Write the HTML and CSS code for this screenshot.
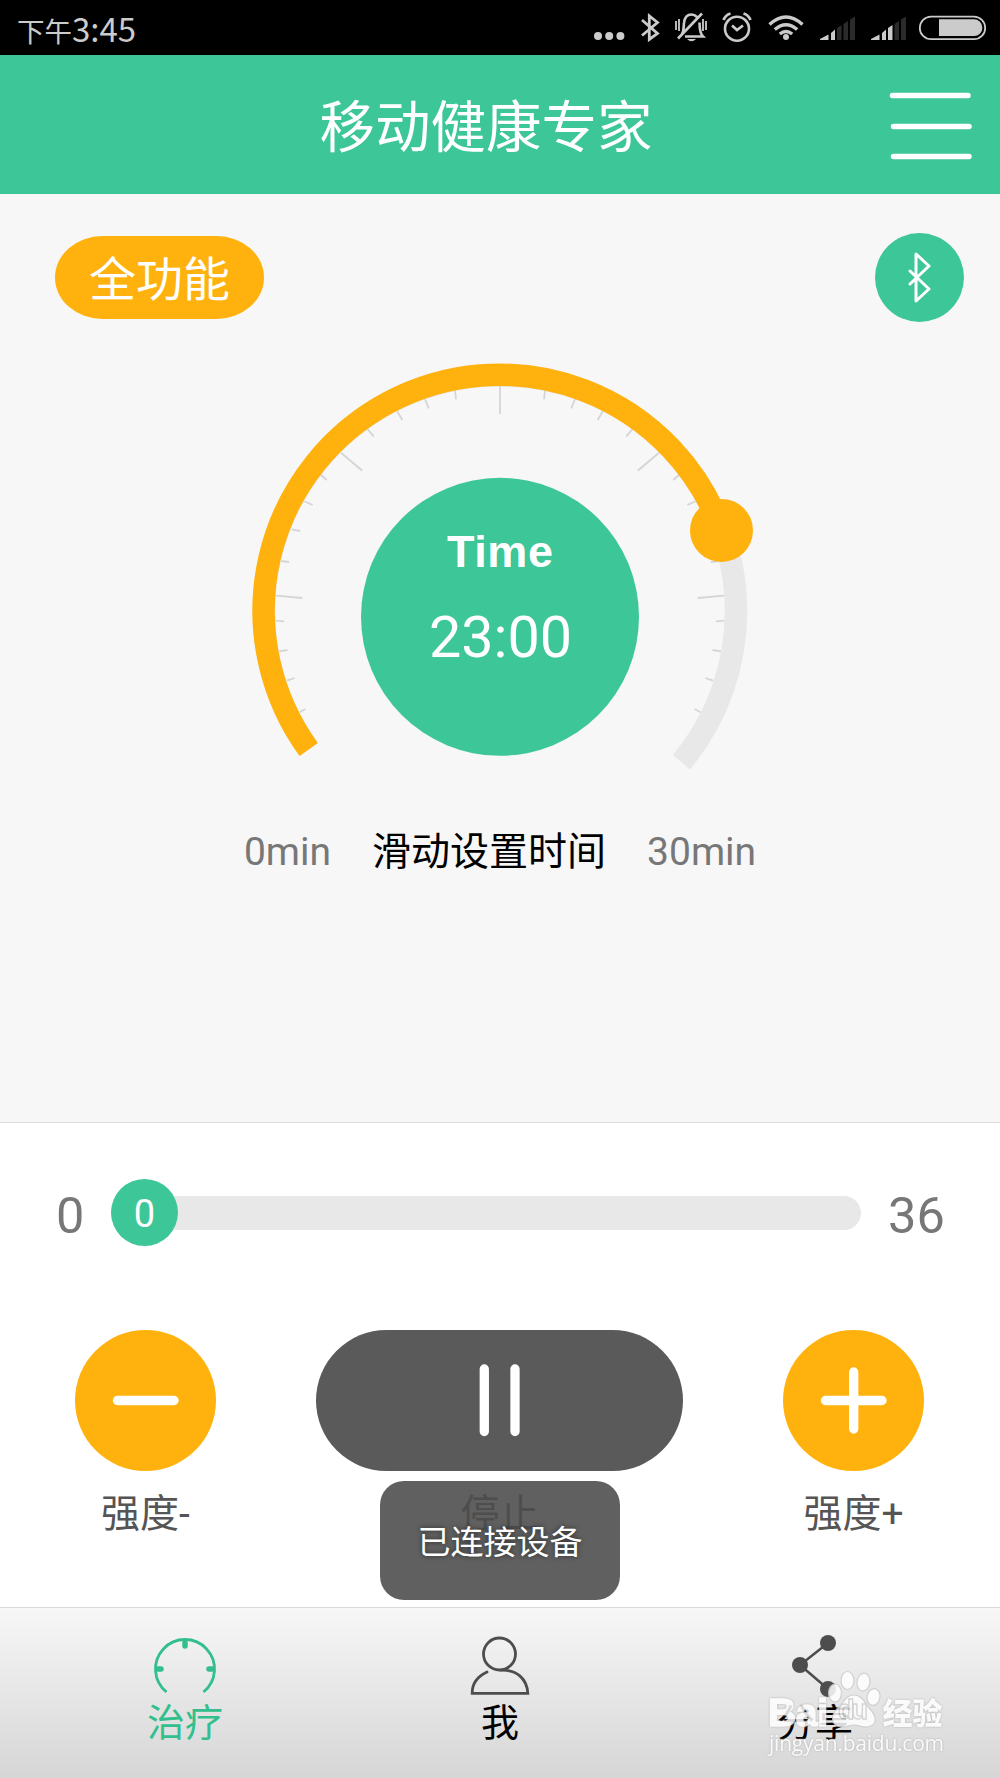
FILE: index.html
```html
<!DOCTYPE html>
<html lang="zh-CN">

<head>
    <meta charset="UTF-8" />
    <meta name="viewport" content="width=device-width, initial-scale=1.0" />
    <title>移动健康专家</title>
    <link rel="stylesheet" href="styles.css">
</head>

<body>
    <div class="status-bar">
        <div class="clock">下午<span>3:45</span></div>
        <svg class="status-icons" viewBox="590 0 400 55" fill="none" stroke="#cbcbcb">
            <!-- notifications -->
            <g fill="#cbcbcb" stroke="none">
                <circle cx="598" cy="36" r="4" />
                <circle cx="609.2" cy="36" r="4" />
                <circle cx="620.4" cy="36" r="4" />
            </g>
            <!-- bluetooth -->
            <path d="M642 20l15.500 13.500L649.300 39.500V16l8.200 6.500L642 35.500" stroke-width="2.800" />
            <!-- muted bell -->
            <path d="M682 34c2-3 1.500-7 2-11 .5-5 3-8.500 7.500-8.500 2.500 0 4 1 5.500 2.500M685 36.500h18c-3-3-3.500-7-3.500-14M678 38.500L702 13.500" stroke-width="2.600" />
            <path d="M687 39h9q-4.500 4.500-9 0z" fill="#cbcbcb" stroke="none" />
            <path d="M676 21v9M679 19v12M703 19v12M706 21v9" stroke-width="1.800" />
            <!-- alarm -->
            <circle cx="737" cy="28.700" r="12" stroke-width="2.600" />
            <path d="M732 25.500l5 4.500 6-4.500" stroke-width="2.700" />
            <path d="M723.500 20q2-5 7-6.500M750.500 20q-2-5-7-6.500" stroke-width="2.800" />
            <!-- wifi -->
            <g stroke-width="3.400">
                <path d="M769.500 24.500q16.500-15 33 0" />
                <path d="M774.800 29.500q11.200-9.500 22.400 0" />
                <path d="M779.800 34q6.200-5 12.400 0" />
            </g>
            <circle cx="786" cy="37" r="3" fill="#cbcbcb" stroke="none" />
            <!-- signal -->
            <g stroke="none">
                <path d="M820 40v-1l8.500-4.500V40zM831 33l4-3.500V40h-4z" fill="#cbcbcb" />
                <path d="M837 28l4.500-3v15H837zM843.500 24l4.500-3v19h-4.500zM850 19.500l5-3V40h-5z" fill="#2b2b2b" />
                <path d="M871 40v-1l8.500-4.500V40zM882 33l4-3.500V40h-4zM888 28l4.500-3v15H888z" fill="#cbcbcb" />
                <path d="M894.500 24l4.500-3v19h-4.500zM901 19.500l5-3V40h-5z" fill="#2b2b2b" />
            </g>
            <!-- battery -->
            <rect x="919.800" y="16.600" width="65.400" height="22.600" rx="11.300" stroke-width="1.800" />
            <path d="M939 19.300h35a8.400 8.400 0 0 1 0 16.800h-35z" fill="#cbcbcb" stroke="none" />
        </svg>
    </div>

    <header class="header">
        <h1>移动健康专家</h1>
        <svg class="menu" viewBox="0 0 84 68" stroke="#fff" stroke-width="5.500" stroke-linecap="round">
            <path d="M3.500 3.500H79M4.500 34.500H80M4.500 64.500H80" />
        </svg>
    </header>

    <section class="timer">
        <div class="timer-top">
            <button class="mode">全功能</button>
            <button class="bt">
                <svg viewBox="0 0 89 89" fill="none" stroke="#fff" stroke-width="3" stroke-linecap="round" stroke-linejoin="round">
                    <path d="M35 38l19 18-13 12V21l13 12-19 18" />
                </svg>
            </button>
        </div>

        <svg class="dial" viewBox="240 350 520 430">
            <path d="M308.700 749.500A236 236 0 1 1 681.400 762.200" class="dial-track" />
            <g class="ticks">
                <path d="M500 386V414" />
                <g id="ticks">
                    <path d="M341 452.700L362.300 470.700M276 595.700L302.300 598" />
                    <path d="M455 390L456 399.300M425 399L428.700 408.300M397 411L402.300 420M367 428.500L373.700 436.300M320 474L326.700 480M304.400 501.300L312.600 505M291.600 529.300L300.200 531M281.300 561L289.200 562M275.800 620.700L284 621.300M279 651.300L287.500 650M286.800 680.700L294.700 678M299.600 712.300L305.400 709" />
                </g>
                <use href="#ticks" transform="matrix(-1 0 0 1 1000 0)" />
            </g>
            <path d="M308.700 749.500A236 236 0 1 1 721.500 530.400" class="dial-value" />
            <circle cx="721.500" cy="530.400" r="31.500" fill="#ffb20e" />
            <circle cx="500" cy="616.800" r="139" fill="#3dc698" />
            <text x="500" y="567" class="dial-label" textLength="106">Time</text>
            <text x="500.500" y="656.500" class="dial-time">23:00</text>
        </svg>

        <div class="range">
            <span>0min</span>
            <strong>滑动设置时间</strong>
            <span>30min</span>
        </div>
    </section>

    <section class="control">
        <div class="slider">
            <span class="slider-min">0</span>
            <div class="slider-track">
                <div class="slider-thumb">0</div>
            </div>
            <span class="slider-max">36</span>
        </div>

        <div class="buttons">
            <div class="action">
                <svg class="round" viewBox="0 0 141 141">
                    <circle cx="70.500" cy="70.500" r="70.500" />
                    <path d="M42.500 70.500H99" />
                </svg>
                <span>强度-</span>
            </div>
            <div class="action">
                <svg class="pause" viewBox="0 0 367 141">
                    <rect width="367" height="141" rx="70.500" />
                    <path d="M168.300 39V101.500M199 39V101.500" />
                </svg>
                <span>停止</span>
            </div>
            <div class="action">
                <svg class="round" viewBox="0 0 141 141">
                    <circle cx="70.500" cy="70.500" r="70.500" />
                    <path d="M42.500 70.500H99M70.700 42V99" />
                </svg>
                <span>强度+</span>
            </div>
        </div>
    </section>

    <nav class="tabs">
        <a class="tab active">
            <svg viewBox="0 0 70 70" fill="none" stroke="#32bf8d">
                <path d="M16.500 60A29.500 29.500 0 1 1 53.500 60" stroke-width="2.800" />
                <path d="M35 11v3M8 37h3M62 37h-3" stroke-width="5.500" stroke-linecap="round" />
            </svg>
            <span>治疗</span>
        </a>
        <a class="tab">
            <svg viewBox="0 0 70 70" fill="none" stroke="#4d4d4d" stroke-width="2.800">
                <circle cx="34.500" cy="22" r="16" />
                <path d="M22 40Q7 47 7.200 61.300H62.800C62 47 52 37.500 36 38.200" stroke-linecap="round" />
            </svg>
            <span>我</span>
        </a>
        <a class="tab">
            <svg viewBox="0 0 70 70" fill="#4d4d4d" stroke="#4d4d4d">
                <path d="M48 11L20 33L48 57" fill="none" stroke-width="2.500" />
                <g stroke="none">
                    <circle cx="48" cy="11" r="8" />
                    <circle cx="20" cy="33" r="8" />
                    <circle cx="48" cy="57" r="8" />
                </g>
            </svg>
            <span>分享</span>
        </a>
    </nav>

    <div class="toast">已连接设备</div>

    <svg class="watermark" viewBox="764 1666 190 94">
        <g class="mark">
            <ellipse cx="835" cy="1693" rx="6.500" ry="9" />
            <ellipse cx="847.500" cy="1680.500" rx="6.500" ry="9" />
            <ellipse cx="863.500" cy="1682" rx="6.500" ry="9" transform="rotate(8 863.500 1682)" />
            <ellipse cx="873.500" cy="1697" rx="6.500" ry="8.500" transform="rotate(10 873.500 1697)" />
            <path d="M854 1695c9 0 11 9 16 14 7 7 8 17-3 18-5 1-8-2-13-2s-8 3-13 2c-10-1-11-11-4-18 6-5 8-14 17-14z" />
        </g>
        <text x="768" y="1726" class="mark-text mark-bai" textLength="60">Bai</text>
        <text x="882.500" y="1724" class="mark-text mark-cn">经验</text>
        <text x="838" y="1719" class="mark-du" textLength="30">du</text>
        <text x="769" y="1751" class="mark-url" textLength="175">jingyan.baidu.com</text>
    </svg>
</body>

</html>
```
FILE: styles.css
```css
* {
    box-sizing: border-box;
}

body {
    position: relative;
    display: flex;
    flex-direction: column;
    width: 1000px;
    height: 1778px;
    margin: 0;
    overflow: hidden;
    background: #fff;
    font-family: Roboto, "Noto Sans CJK SC", sans-serif;
}

svg {
    display: block;
}

button {
    border: 0;
    padding: 0;
    font-family: inherit;
}

/* status bar */
.status-bar {
    display: flex;
    justify-content: space-between;
    height: 55px;
    padding: 0 10px 0 17px;
    background: #000;
}

.clock {
    color: #cbcbcb;
    font-size: 27.5px;
    line-height: 57px;
}

.clock span {
    font-family: "Noto Sans CJK SC", sans-serif;
    font-size: 33px;
}

.status-icons {
    width: 400px;
    height: 55px;
}

/* header */
.header {
    display: flex;
    align-items: center;
    justify-content: space-between;
    height: 139px;
    padding: 0 27px 0 319.5px;
    background: #3dc698;
}

.header h1 {
    margin: 0;
    padding-top: 8px;
    color: #fff;
    font-size: 55.5px;
    font-weight: 400;
    line-height: 131px;
}

.menu {
    width: 84px;
    height: 68px;
    margin-top: 3px;
}

/* timer */
.timer {
    height: 929px;
    padding-top: 39px;
    background: #f7f7f7;
    border-bottom: 1px solid #dedede;
}

.timer-top {
    display: flex;
    align-items: center;
    justify-content: space-between;
    height: 89px;
    padding: 0 36px 0 55px;
}

.mode {
    width: 209px;
    height: 83px;
    padding-top: 4px;
    border-radius: 48px / 42px;
    background: #ffb20e;
    color: #fff;
    font-size: 47px;
    line-height: 79px;
}

.bt {
    width: 89px;
    height: 89px;
    border-radius: 50%;
    background: #3dc698;
}

.dial {
    width: 520px;
    height: 430px;
    margin: 28px auto 0;
}

.dial-track,
.dial-value {
    fill: none;
    stroke: #e8e8e8;
    stroke-width: 22.5;
}

.dial-value {
    stroke: #ffb20e;
}

.ticks {
    fill: none;
    stroke: #d5d5d5;
    stroke-width: 1.8;
}

.dial-label,
.dial-time {
    fill: #fff;
    font-size: 45px;
    font-weight: 700;
    text-anchor: middle;
}

.dial-label {
    font-family: "Liberation Sans", sans-serif;
}

.dial-time {
    font-size: 57.5px;
    font-weight: 400;
}

.range {
    display: flex;
    align-items: baseline;
    justify-content: center;
    gap: 41px;
    margin-top: 42.5px;
    color: #777;
    font-size: 39px;
    line-height: 58px;
}

.range strong {
    color: #000;
    font-weight: 400;
}

/* strength control */
.control {
    height: 484px;
    padding-top: 56px;
}

.slider {
    display: flex;
    align-items: center;
    height: 67px;
    padding-left: 56px;
    color: #777;
    font-size: 50.5px;
}

.slider-min {
    width: 55px;
    padding-top: 5px;
}

.slider-max {
    padding: 5px 0 0 27px;
}

.slider-track {
    display: flex;
    align-items: center;
    width: 750px;
    height: 34px;
    border-radius: 17px;
    background: #e8e8e8;
}

.slider-thumb {
    width: 67px;
    height: 67px;
    border-radius: 50%;
    background: #3dc698;
    color: #fff;
    font-size: 38px;
    line-height: 70px;
    text-align: center;
}

.buttons {
    display: flex;
    justify-content: space-between;
    padding: 84px 76px 0 75px;
}

.action {
    display: flex;
    flex-direction: column;
    align-items: center;
    color: #555;
    font-size: 39px;
    line-height: 58px;
}

.action span {
    margin-top: 14px;
}

.action path {
    fill: none;
    stroke: #fff;
    stroke-width: 9.3;
    stroke-linecap: round;
}

.round {
    width: 141px;
    height: 141px;
    fill: #ffb20e;
}

.pause {
    width: 367px;
    height: 141px;
    fill: #5a5a5a;
}

/* bottom tabs */
.tabs {
    display: flex;
    height: 171px;
    padding: 24px 27.5px 0;
    border-top: 1px solid #dadada;
    background: linear-gradient(#f7f7f7, #d6d6d6);
}

.tab {
    display: flex;
    flex: 1;
    flex-direction: column;
    align-items: center;
    color: #000;
    font-size: 38px;
    line-height: 50px;
}

.tab svg {
    width: 70px;
    height: 70px;
    margin-bottom: -4px;
}

.tab.active {
    color: #32bf8d;
}

.toast {
    position: absolute;
    left: 380px;
    top: 1481px;
    width: 240px;
    height: 119px;
    border-radius: 24px;
    background: rgba(76, 76, 76, 0.89);
    color: #fff;
    font-size: 33px;
    line-height: 123px;
    text-align: center;
    text-shadow: 0 0 5px rgba(0, 0, 0, 0.6);
}

/* watermark over the last tab */
.watermark {
    position: absolute;
    left: 764px;
    top: 1666px;
    width: 190px;
    height: 94px;
    opacity: 0.85;
}

.mark {
    fill: #fff;
    stroke: #ccc;
    stroke-width: 1.2;
}

.mark-text {
    fill: #fff;
    stroke: #fff;
    stroke-width: 1.5;
    filter: drop-shadow(0 0 1px #aaa);
}

.mark-bai,
.mark-du {
    font-family: "Liberation Sans", sans-serif;
    font-size: 39px;
    font-weight: 700;
}

.mark-du {
    fill: #fff;
    font-size: 27px;
    stroke: #d0d0d0;
    stroke-width: 1.3;
}

.mark-cn {
    font-size: 30px;
    font-weight: 900;
    stroke-width: 0;
}

.mark-url {
    fill: #fff;
    font-family: "Open Sans", sans-serif;
    font-size: 21px;
    filter: drop-shadow(0 0 1px #aaa);
}
```
